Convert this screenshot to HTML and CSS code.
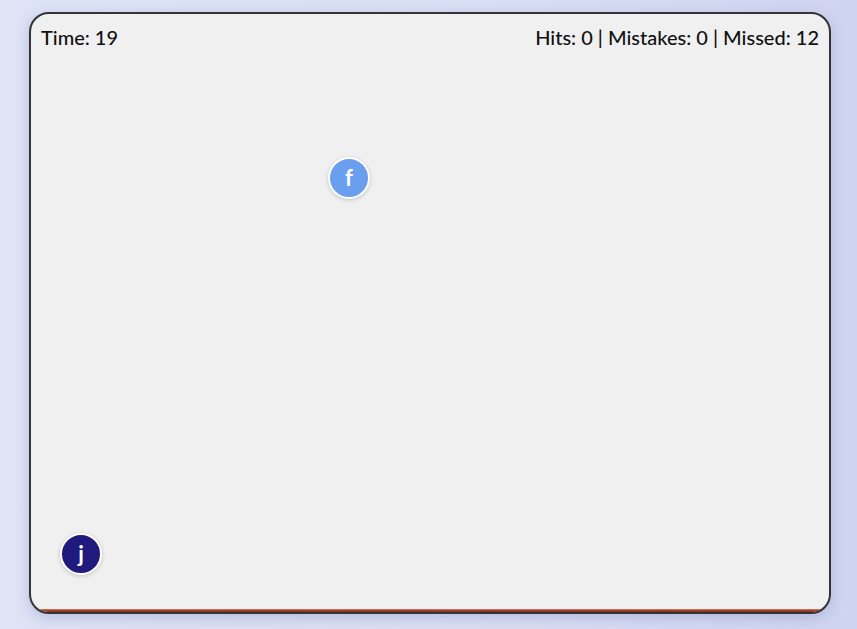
FILE: index.html
```html
<!DOCTYPE html>
<html>
<head>
<meta charset="utf-8">
<link rel="stylesheet" href="styles.css">
</head>
<body>
<div class="board">
  <div class="hud">
    <span class="time">Time: 19</span>
    <span class="stats">Hits: 0 | Mistakes: 0 | Missed: 12</span>
  </div>
  <div class="field">
    <div class="bubble bubble-f" style="left:297px;top:107px">f</div>
    <div class="bubble bubble-j" style="left:29px;top:483px">j</div>
  </div>
  <div class="progress"></div>
</div>
</body>
</html>
```
FILE: styles.css
```css
html, body {
  margin: 0;
  height: 100%;
}
body {
  background: linear-gradient(90deg, #dee3f6 0%, #d9def4 60%, #cfd5f0 100%);
  font-family: "Lato", "Open Sans", sans-serif;
  padding: 12px 26px 0 29px;
  box-sizing: border-box;
}
.board {
  width: 802px;
  height: 602px;
  box-sizing: border-box;
  border: 2px solid #333338;
  border-radius: 20px;
  background: #f0f0f0;
  box-shadow: 0 4px 14px rgba(80, 90, 150, 0.25);
  display: flex;
  flex-direction: column;
  overflow: hidden;
  position: relative;
}
.hud {
  display: flex;
  justify-content: space-between;
  padding: 10px 10px 0 10px;
  font-size: 20px;
  font-weight: 500;
  color: #111;
  line-height: 26px;
}
.field {
  flex: 1;
  position: relative;
}
.bubble {
  position: absolute;
  width: 38px;
  height: 38px;
  border-radius: 50%;
  border: 2px solid #fff;
  box-shadow: 0 1px 4px rgba(0,0,0,0.18);
  color: #fff;
  font-weight: 700;
  font-size: 22px;
  display: flex;
  align-items: center;
  justify-content: center;
  line-height: 1;
}
.bubble-f { background: #6a9ff0; }
.bubble-j { background: #201a7e; }
.progress {
  height: 3px;
  background: linear-gradient(180deg, #d88a6a 0%, #a9462e 40%, #7a2c20 100%);
}
```
